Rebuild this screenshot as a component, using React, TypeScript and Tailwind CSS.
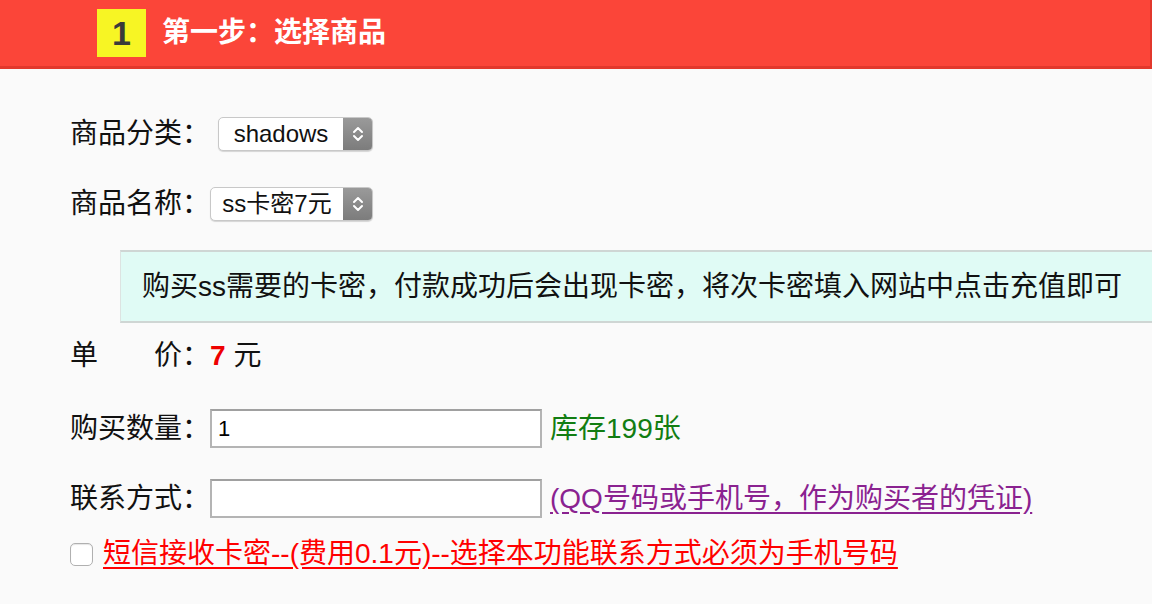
import React from 'react';

const FONT = { fontFamily: '"Liberation Sans", "Noto Sans CJK SC", sans-serif' };

const Chevrons: React.FC = () => (
  <svg width="14" height="20" viewBox="0 0 14 20" fill="none" stroke="#fff" strokeWidth="2" strokeLinecap="round" strokeLinejoin="round">
    <path d="M3 8 L7 4 L11 8" />
    <path d="M3 12 L7 16 L11 12" />
  </svg>
);

const FakeSelect: React.FC<{ value: string; className: string }> = ({ value, className }) => (
  <div className={`flex h-[34px] items-stretch overflow-hidden rounded-[5px] border border-[#c8c8c8] bg-white shadow-[0_1px_1px_rgba(0,0,0,0.15)] ${className}`}>
    <div className="flex flex-1 items-center justify-center text-[24px] text-[#111]">{value}</div>
    <div className="flex w-[29px] items-center justify-center bg-gradient-to-b from-[#9a9a9a] to-[#7c7c7c]">
      <Chevrons />
    </div>
  </div>
);

const TextBox: React.FC<{ value?: string }> = ({ value }) => (
  <div className="flex h-[39px] w-[332px] items-center border-2 border-[#b4b4b4] border-t-[#a0a0a0] bg-white px-[6px] text-[22px] text-black">
    {value}
  </div>
);

export default function App() {
  return (
    <div className="flex min-h-[604px] w-[1168px] bg-white" style={FONT}>
      <div className="w-[1152px] bg-[#fafafa]">
        {/* header */}
        <div className="flex h-[69px] items-center border-b-[3px] border-r-2 border-b-[#e2382c] border-r-[#e2382c] bg-[#fb4539]">
          <div className="ml-[97px] flex h-[48px] w-[49px] items-center justify-center bg-[#f7f524] text-[34px] font-bold text-[#3a3a3a]">
            1
          </div>
          <div className="ml-[16px] text-[28px] font-bold text-white">第一步：选择商品</div>
        </div>

        <div className="pl-[70px] text-[28px] leading-none text-[#111]">
          <div className="mt-[48px] flex h-[34px] items-center">
            <span>商品分类：</span>
            <FakeSelect value="shadows" className="ml-[8px] w-[155px]" />
          </div>

          <div className="mt-[36px] flex h-[34px] items-center">
            <span>商品名称：</span>
            <FakeSelect value="ss卡密7元" className="w-[163px]" />
          </div>
        </div>

        <div className="mt-[29px] ml-[120px] flex h-[73px] items-center border-y-2 border-l border-y-[#cfd6d4] border-l-[#dde3e1] bg-[#e0fbf5] pl-[21px] text-[28px] leading-none text-[#111]">
          购买ss需要的卡密，付款成功后会出现卡密，将次卡密填入网站中点击充值即可
        </div>

        <div className="pl-[70px] text-[28px] leading-none text-[#111]">
          <div className="mt-[16px] flex h-[34px] items-center">
            <span>单　　价：</span>
            <span className="font-bold text-[#ee0000]">7</span>
            <span className="ml-[8px]">元</span>
          </div>

          <div className="mt-[36px] flex h-[39px] items-center">
            <span>购买数量：</span>
            <TextBox value="1" />
            <span className="ml-[8px] text-[#127d12]">库存199张</span>
          </div>

          <div className="mt-[31px] flex h-[39px] items-center">
            <span>联系方式：</span>
            <TextBox />
            <a href="#" className="ml-[8px] text-[#8a2290] underline underline-offset-[4px]">
              (QQ号码或手机号，作为购买者的凭证)
            </a>
          </div>

          <div className="mt-[19px] flex h-[34px] items-center">
            <span className="h-[23px] w-[23px] rounded-[5px] border border-[#b0b0b0] bg-white shadow-[inset_0_1px_1px_rgba(0,0,0,0.1)]" />
            <a href="#" className="ml-[10px] text-[#ff0000] underline underline-offset-[4px]">
              短信接收卡密--(费用0.1元)--选择本功能联系方式必须为手机号码
            </a>
          </div>
        </div>
      </div>
      <div className="flex-1 bg-white" />
    </div>
  );
}
